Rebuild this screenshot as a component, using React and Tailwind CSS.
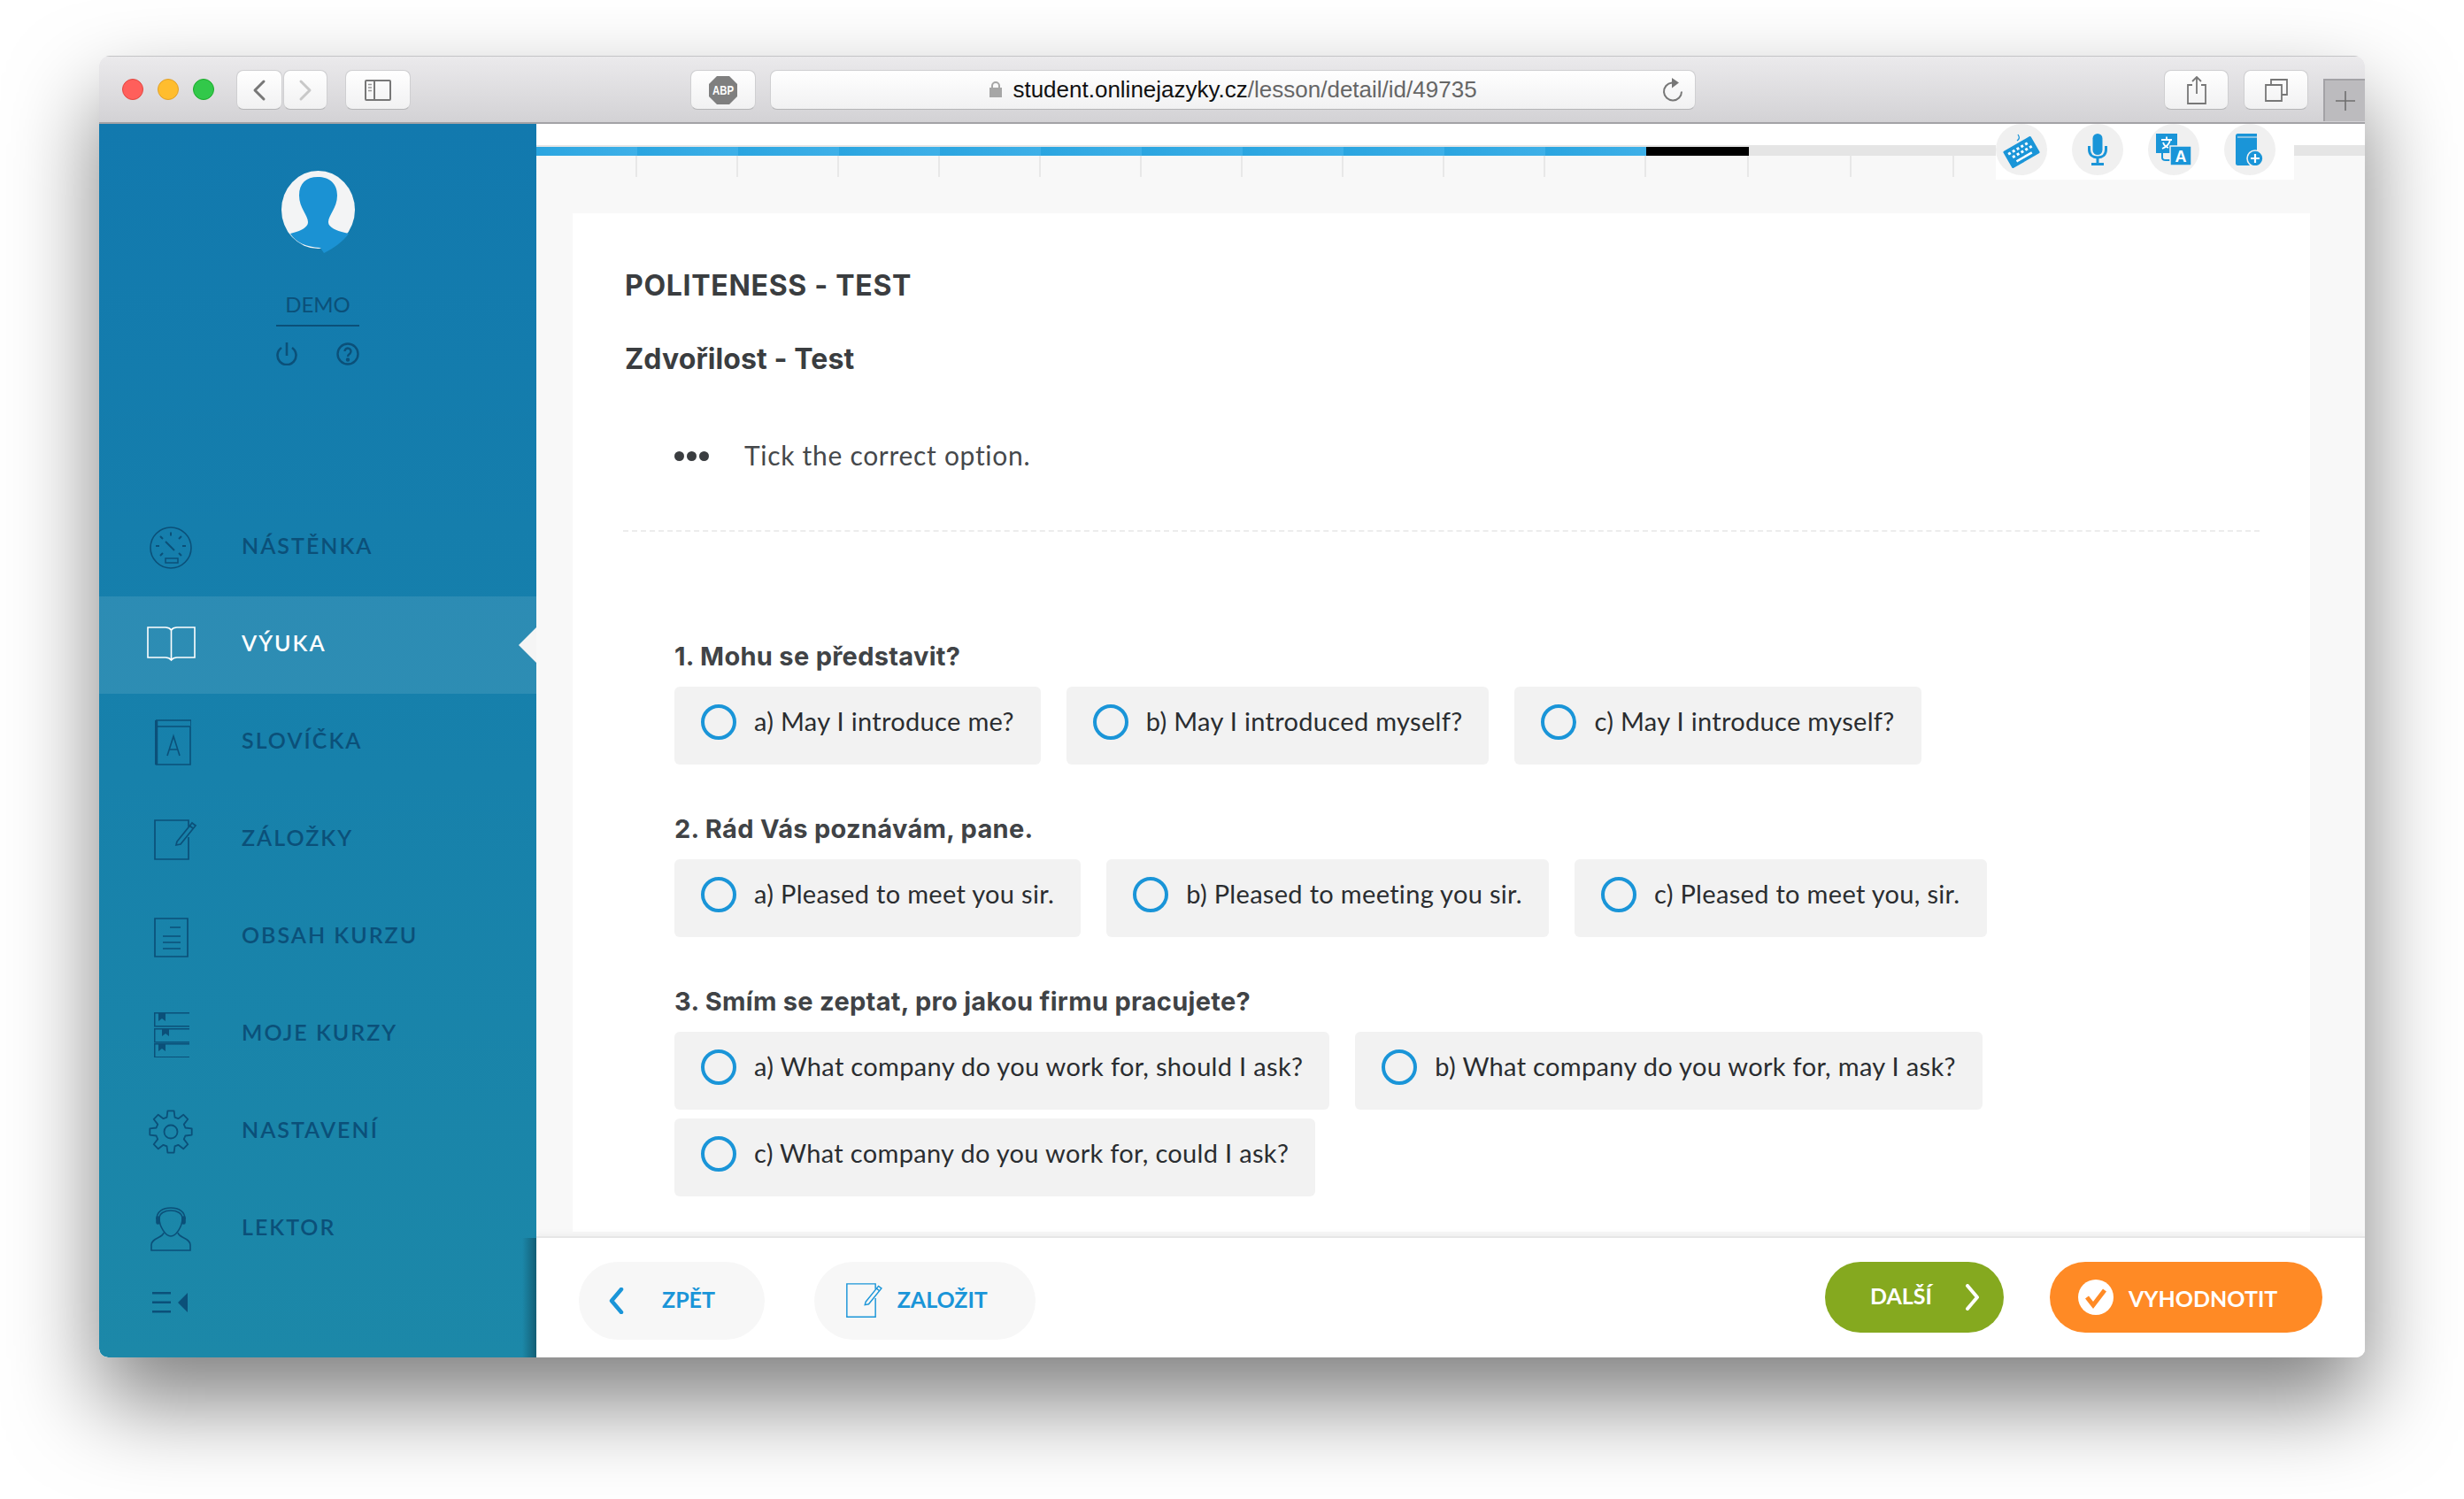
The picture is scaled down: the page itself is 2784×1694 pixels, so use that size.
import { ChevronLeft, ChevronRight } from "lucide-react";

const dark = "#0b5079";

const gearPoints = () => {
  const pts = [];
  for (let i = 0; i < 8; i++) {
    const a = (i * Math.PI) / 4 - Math.PI / 2;
    [[-0.27, 17], [-0.15, 24], [0.15, 24], [0.27, 17]].forEach(([d, r]) => {
      pts.push(`${(25 + r * Math.cos(a + d)).toFixed(1)},${(25 + r * Math.sin(a + d)).toFixed(1)}`);
    });
  }
  return pts.join(" ");
};

function GaugeIcon() {
  return (
    <svg width="48" height="48" viewBox="0 0 48 48" fill="none" stroke="currentColor" strokeWidth="1.600">
      <circle cx="24" cy="24" r="23" />
      <path d="M18 17l10 10M24 6.500v4M12 11l3 3M36 11l-3 3M7 22h4M37 22h4M12 33l3-3M36 33l-3-3" strokeWidth="2" />
      <rect x="18" y="36" width="14" height="5" strokeWidth="1.500" />
    </svg>
  );
}

function BookIcon() {
  return (
    <svg width="55" height="42" viewBox="0 0 55 42" fill="none" stroke="#fff" strokeWidth="1.600">
      <path d="M1 1h20c3 0 5 1 6.500 3C29 2 31 1 34 1h20v34H34c-3 0-5 1-6.500 3C26 36 24 35 21 35H1z" />
      <path d="M27.500 4v34" />
    </svg>
  );
}

function WordsIcon() {
  return (
    <svg width="41" height="52" viewBox="0 0 41 52" fill="none" stroke="currentColor" strokeWidth="1.600">
      <path d="M1.500 8H40V51H1.500z" />
      <path d="M1 1h40v6" />
      <path d="M1.500 1v50" strokeWidth="3.500" />
      <path d="M14 41l7-22 7 22M16.500 34h9" />
    </svg>
  );
}

function NoteIcon({ color = "currentColor", size = 1 }) {
  return (
    <svg width={49 * size} height={46 * size} viewBox="0 0 49 46" fill="none" stroke={color} strokeWidth="1.700">
      <path d="M39 8V1H1v44h38V20" />
      <path d="M26 25L43 4l4 3-17 21-5 1z" />
      <path d="M40 7l4 3" />
    </svg>
  );
}

function ContentsIcon() {
  return (
    <svg width="39" height="45" viewBox="0 0 39 45" fill="none" stroke="currentColor" strokeWidth="1.700">
      <path d="M1 1h37v43H1z" />
      <path d="M18 11h12M10 21h20M10 28h20M10 35h20" />
    </svg>
  );
}

function CoursesIcon() {
  return (
    <svg width="40" height="51" viewBox="0 0 40 51" fill="currentColor">
      <path d="M0 0h40v1.500H1.500V15H40v1.500H0zM0 18h40v1.500H1.500V33H40v1.500H0zM0 35h40v1.500H1.500V50H40v1.500H0z" />
      <path d="M5 1h8v9l-4-3-4 3zM9 19h8v8l-4-3-4 3zM5 36h8v8l-4-3-4 3z" />
    </svg>
  );
}

function GearIcon() {
  return (
    <svg width="50" height="50" viewBox="0 0 50 50" fill="none" stroke="currentColor" strokeWidth="1.800" strokeLinejoin="round">
      <polygon points={gearPoints()} />
      <circle cx="25" cy="25" r="7.500" />
    </svg>
  );
}

function TutorIcon() {
  return (
    <svg width="46" height="50" viewBox="0 0 46 50" fill="none" stroke="currentColor" strokeWidth="1.600">
      <path d="M7 14C7 5 14 1 23 1s16 4 16 13" />
      <path d="M10 13c0-6 6-9 13-9s13 3 13 9c0 9-7 20-13 20S10 22 10 13z" />
      <rect x="7" y="11" width="3" height="8" rx="1.500" fill="currentColor" />
      <rect x="36" y="11" width="3" height="8" rx="1.500" fill="currentColor" />
      <path d="M15 29c-1 6-14 6-14 14v6h44v-6c0-8-13-8-14-14" />
    </svg>
  );
}

const navItems = [
  { label: "NÁSTĚNKA", icon: <GaugeIcon /> },
  { label: "VÝUKA", icon: <BookIcon />, active: true },
  { label: "SLOVÍČKA", icon: <WordsIcon />, nudge: "pl-[4px]" },
  { label: "ZÁLOŽKY", icon: <NoteIcon />, nudge: "pl-[10px]" },
  { label: "OBSAH KURZU", icon: <ContentsIcon /> },
  { label: "MOJE KURZY", icon: <CoursesIcon />, nudge: "pl-[2px]" },
  { label: "NASTAVENÍ", icon: <GearIcon /> },
  { label: "LEKTOR", icon: <TutorIcon /> },
];

const questions = [
  {
    title: "1. Mohu se představit?",
    options: ["a) May I introduce me?", "b) May I introduced myself?", "c) May I introduce myself?"],
  },
  {
    title: "2. Rád Vás poznávám, pane.",
    options: ["a) Pleased to meet you sir.", "b) Pleased to meeting you sir.", "c) Pleased to meet you, sir."],
  },
  {
    title: "3. Smím se zeptat, pro jakou firmu pracujete?",
    options: [
      "a) What company do you work for, should I ask?",
      "b) What company do you work for, may I ask?",
      "c) What company do you work for, could I ask?",
    ],
  },
];

function ToolbarButton({ className, children }) {
  return (
    <div className={`h-[45px] flex items-center justify-center rounded-[8px] border border-[#cfcfd1] border-b-[#b5b5b7] bg-gradient-to-b from-white to-[#f1f1f2] ${className}`}>
      {children}
    </div>
  );
}

function Toolbar() {
  return (
    <div className="h-[77px] shrink-0 flex items-start pt-[15px] pl-[26px] border-b-2 border-[#a3a2a6] border-t border-t-[#c4c4c6] bg-gradient-to-b from-[#ebeaec] to-[#d3d2d5]">
      <div className="flex gap-[16px] mt-[10px]">
        <div className="w-[24px] h-[24px] rounded-full bg-[#ff5f5b] border border-[#e2463f]" />
        <div className="w-[24px] h-[24px] rounded-full bg-[#ffbd2e] border border-[#e1a029]" />
        <div className="w-[24px] h-[24px] rounded-full bg-[#32c84a] border border-[#1aab29]" />
      </div>
      <ToolbarButton className="w-[52px] ml-[25px]">
        <ChevronLeft size={40} strokeWidth={1.800} color="#777" />
      </ToolbarButton>
      <ToolbarButton className="w-[50px] ml-[1px]">
        <ChevronRight size={40} strokeWidth={1.800} color="#c8c8c8" />
      </ToolbarButton>
      <ToolbarButton className="w-[74px] ml-[20px]">
        <svg width="30" height="24" viewBox="0 0 30 24" fill="none" stroke="#777" strokeWidth="2">
          <rect x="1" y="1" width="28" height="22" rx="1" />
          <path d="M11 1v22" />
          <path d="M4 5.500h4M4 9h4M4 12.500h4" strokeWidth="1.500" stroke="#999" />
        </svg>
      </ToolbarButton>
      <ToolbarButton className="w-[74px] ml-[316px]">
        <svg width="34" height="34" viewBox="0 0 34 34">
          <polygon points="10,1 24,1 33,10 33,24 24,33 10,33 1,24 1,10" fill="#7f7f7f" />
          <text x="17" y="22" textAnchor="middle" fill="#fff" fontSize="14" fontWeight="700" textLength="24" lengthAdjust="spacingAndGlyphs" className="font-['Liberation_Sans',sans-serif]">ABP</text>
        </svg>
      </ToolbarButton>
      <ToolbarButton className="w-[1046px] ml-[16px] relative font-['Liberation_Sans',sans-serif] text-[26px]">
        <svg width="16" height="20" viewBox="0 0 16 20" className="mr-[11px] mb-[2px]">
          <path d="M4 9V6a4 4 0 018 0v3" fill="none" stroke="#a6a6a6" strokeWidth="2" />
          <rect x="1" y="8" width="14" height="11" fill="#a6a6a6" />
        </svg>
        <span className="text-[#111]">student.onlinejazyky.cz</span>
        <span className="text-[#666]">/lesson/detail/id/49735</span>
        <svg width="24" height="28" viewBox="0 0 24 28" fill="none" className="absolute right-[13px] top-[8px]">
          <path d="M11 5.500A10 10 0 1022 15.500" stroke="#777" strokeWidth="2" />
          <path d="M11 0l8 5.500-8 6z" fill="#777" />
        </svg>
      </ToolbarButton>
      <ToolbarButton className="w-[73px] ml-[529px]">
        <svg width="24" height="32" viewBox="0 0 24 32" fill="none" stroke="#777" strokeWidth="1.800">
          <path d="M7 10H2v21h20V10h-5M12 20V1M7 6l5-5 5 5" />
        </svg>
      </ToolbarButton>
      <ToolbarButton className="w-[73px] ml-[17px]">
        <svg width="26" height="26" viewBox="0 0 26 26" fill="none" stroke="#777" strokeWidth="1.800">
          <path d="M7 7V1h18v17h-6" />
          <path d="M1 7h18v18H1z" />
        </svg>
      </ToolbarButton>
      <div className="w-[47px] h-[48px] ml-[17px] mt-[10px] flex items-center justify-center bg-[#bcbbbe] border-l-2 border-t-2 border-[#a3a2a6]">
        <svg width="22" height="22" viewBox="0 0 22 22" stroke="#6f6f6f" strokeWidth="1.600">
          <path d="M11 0v22M0 11h22" />
        </svg>
      </div>
    </div>
  );
}

function Avatar() {
  return (
    <svg width="83" height="93" viewBox="0 0 83 93">
      <ellipse cx="41.500" cy="44" rx="41.500" ry="44" fill="#f3f4f5" />
      <path d="M41 7C28 7 20 14 20 28c0 14 10 22 10 30 0 6-8 10-20 13 6 10 18 15 34 16l4 6c10-5 22-13 28-22-14-3-23-7-23-13 0-8 10-16 10-30C63 14 54 7 41 7z" fill="#1b92d3" />
    </svg>
  );
}

function Sidebar() {
  return (
    <div className="w-[494px] shrink-0 flex flex-col bg-gradient-to-b from-[#1279ae] to-[#1c88a8] text-[#0b5079] rounded-bl-[10px]">
      <div className="h-[424px] flex flex-col items-center pt-[53px]">
        <Avatar />
        <div className="mt-[43px] w-[94px] pb-[9px] text-center text-[24px] leading-[29px] border-b-2 border-[#0b5079]">DEMO</div>
        <div className="mt-[17px] flex gap-[44px] items-center pr-[1px]">
          <svg width="24" height="27" viewBox="0 0 24 27" fill="none" stroke={dark} strokeWidth="2.600">
            <path d="M12 1v15" />
            <path d="M6 7a10.500 10.500 0 1012 0" />
          </svg>
          <svg width="26" height="26" viewBox="0 0 26 26" fill="none" stroke={dark} strokeWidth="2.400">
            <circle cx="13" cy="13" r="11.500" />
            <path d="M9.500 10a3.500 3.500 0 116 2.500c-1.500 1-2.500 1.500-2.500 3.500" />
            <circle cx="13" cy="19.500" r="1" fill={dark} />
          </svg>
        </div>
      </div>
      {navItems.map((item) => (
        <div key={item.label} className={`relative h-[110px] flex items-center pl-[48px] ${item.active ? "bg-white/10 text-white" : ""}`}>
          <div className={`w-[66px] flex justify-center ${item.nudge || ""}`}>{item.icon}</div>
          <div className="ml-[47px] mb-[5px] text-[25px] leading-none font-semibold tracking-[2px]">{item.label}</div>
          {item.active && (
            <div className="absolute right-0 top-[35px] w-0 h-0 border-y-[20px] border-y-transparent border-r-[20px] border-r-[#f5f5f5]" />
          )}
        </div>
      ))}
      <div className="pl-[60px] pt-[16px]">
        <svg width="40" height="24" viewBox="0 0 40 24" fill={dark}>
          <path d="M0 0h21v2.500H0zM0 10.500h21V13H0zM0 21h21v2.500H0zM40 1v22L29 12z" />
        </svg>
      </div>
    </div>
  );
}

function ToolCircle({ className = "", children }) {
  return (
    <div className={`w-[58px] h-[58px] rounded-full bg-[#f0f0f0] flex items-center justify-center ${className}`}>
      {children}
    </div>
  );
}

function ProgressBar() {
  const segments = Array.from({ length: 18 }, (_, i) => i);
  const widthOf = (i) => (i < 11 ? "w-[114px]" : i === 17 ? "flex-1" : "w-[116px]");
  return (
    <div className="relative shrink-0">
      <div className="h-[24px] bg-white" />
      <div className="h-[12px] flex items-end bg-[#e5e5e5]">
        {segments.map((i) => (
          <div
            key={i}
            className={`${widthOf(i)} h-[10px] ${i < 11 ? "bg-gradient-to-r from-[#2aa5e0] to-[#3eb0e8]" : ""} ${i === 11 ? "bg-black" : ""}`}
          />
        ))}
      </div>
      <div className="h-[24px] flex bg-[#f8f8f8]">
        {segments.map((i) => (
          <div key={i} className={`${widthOf(i)} border-r-2 border-[#e8e8e8] last:border-r-0`} />
        ))}
      </div>
      <div className="absolute left-[1649px] top-0 w-[337px] h-[63px] bg-white flex gap-[28px]">
        <ToolCircle>
          <svg width="42" height="42" viewBox="0 0 42 42">
            <g transform="rotate(-30 21 24)">
              <rect x="3" y="13" width="36" height="22" rx="1.500" fill="#1a95d8" />
              <path d="M7 17h3v3H7zM12.500 17h3v3h-3zM18 17h3v3h-3zM23.500 17h3v3h-3zM29 17h3v3h-3zM9.500 22.500h3v3h-3zM15 22.500h3v3h-3zM20.500 22.500h3v3h-3zM26 22.500h3v3h-3zM31.500 22.500h3v3h-3zM11 29h20v2.500H11z" fill="#fff" />
            </g>
            <path d="M16 11c3-2 3-4 1-7" fill="none" stroke="#1a95d8" strokeWidth="1.300" />
          </svg>
        </ToolCircle>
        <ToolCircle>
          <svg width="22" height="36" viewBox="0 0 22 36" fill="none" stroke="#1a95d8" strokeWidth="3">
            <rect x="5.500" y="0" width="11" height="24" rx="5.500" fill="#1a95d8" stroke="none" />
            <path d="M1.500 14v4c0 6 4 9 9.500 9s9.500-3 9.500-9v-4M11 27v7M4 34.500h14" />
          </svg>
        </ToolCircle>
        <ToolCircle>
          <svg width="40" height="36" viewBox="0 0 40 36" fill="#1a95d8">
            <path d="M0 0h24v22H0z" />
            <path d="M7 22v5c0 2 1 3 4 3h6" fill="none" stroke="#1a95d8" strokeWidth="2" />
            <path d="M16 14h24v22H16z" stroke="#f0f0f0" strokeWidth="1.500" />
            <path d="M6 7h12M12 3.500V7M16 7c-1 5-4 8-9 10M8 10c1 3 3 5 6 6" fill="none" stroke="#fff" strokeWidth="1.800" />
            <text x="28" y="32" textAnchor="middle" fill="#fff" fontSize="18" fontWeight="700" className="font-['Liberation_Sans',sans-serif]">A</text>
          </svg>
        </ToolCircle>
        <ToolCircle>
          <svg width="32" height="36" viewBox="0 0 32 36">
            <path d="M2.500 0H24v36H2.500A2.500 2.500 0 010 33.500v-31A2.500 2.500 0 012.500 0z" fill="#1a95d8" />
            <path d="M2 4h22" stroke="#f0f0f0" strokeWidth="1.200" />
            <circle cx="22" cy="28" r="9" fill="#1a95d8" stroke="#f0f0f0" strokeWidth="1.600" />
            <path d="M22 23v10M17 28h10" stroke="#fff" strokeWidth="2.200" />
          </svg>
        </ToolCircle>
      </div>
    </div>
  );
}

function Option({ text }) {
  return (
    <div className="h-[88px] flex items-start pt-[20px] pl-[30px] pr-[30px] bg-[#f2f2f2] rounded-[6px]">
      <div className="w-[40px] h-[40px] rounded-full border-[4px] border-[#1a95d8] shrink-0" />
      <div className="ml-[20px] h-[38px] leading-[38px] text-[29px] text-[#2a2d30] tracking-[0.320px]">{text}</div>
    </div>
  );
}

function BottomBar() {
  return (
    <div className="relative shrink-0 h-[137px] flex justify-between items-start pt-[27px] px-[48px] bg-white border-t-2 border-[#e6e6e6] shadow-[0_-4px_6px_rgba(0,0,0,0.03)]">
      <div className="absolute right-full top-0 bottom-0 w-[16px] bg-gradient-to-l from-black/30 to-transparent" />
      <div className="flex gap-[56px]">
        <div className="w-[210px] h-[88px] rounded-full bg-[#f7f7f7] flex items-center pl-[32px] text-[#1a95d8]">
          <svg width="20" height="30" viewBox="0 0 20 30" fill="none" stroke="#1a95d8" strokeWidth="4.500" strokeLinecap="round" strokeLinejoin="round">
            <path d="M16 2L5 15l11 13" />
          </svg>
          <span className="ml-[42px] mb-[2px] text-[25px] font-bold">ZPĚT</span>
        </div>
        <div className="w-[250px] h-[88px] rounded-full bg-[#f7f7f7] flex items-center pl-[36px] text-[#1a95d8]">
          <NoteIcon color="#1a95d8" size={0.85} />
          <span className="ml-[16px] mb-[2px] text-[25px] font-bold">ZALOŽIT</span>
        </div>
      </div>
      <div className="flex gap-[52px]">
        <div className="w-[202px] h-[80px] rounded-full bg-[#85a91f] flex items-center pl-[51px] text-white">
          <span className="mb-[2px] text-[25px] font-bold">DALŠÍ</span>
          <svg width="20" height="30" viewBox="0 0 20 30" fill="none" stroke="#fff" strokeWidth="4" strokeLinecap="round" strokeLinejoin="round" className="ml-[36px]">
            <path d="M4 2l11 13L4 28" />
          </svg>
        </div>
        <div className="w-[308px] h-[80px] rounded-full bg-[#ff8a25] flex items-center pl-[32px] text-white">
          <svg width="40" height="40" viewBox="0 0 40 40">
            <circle cx="20" cy="20" r="20" fill="#fff" />
            <path d="M10 20l7 9 13-17" fill="none" stroke="#ff8a25" strokeWidth="5" />
          </svg>
          <span className="ml-[17px] mt-[3px] text-[25px] font-bold">VYHODNOTIT</span>
        </div>
      </div>
    </div>
  );
}

export default function App() {
  return (
    <div className="w-[2784px] h-[1694px] bg-white overflow-hidden pt-[63px] pl-[112px] font-['Lato',sans-serif]">
      <div className="w-[2560px] h-[1471px] flex flex-col rounded-t-[12px] rounded-b-[10px] shadow-[0_50px_100px_rgba(0,0,0,0.5)] overflow-hidden">
        <Toolbar />
        <div className="flex-1 flex min-h-0">
          <Sidebar />
          <div className="flex-1 flex flex-col min-w-0 bg-[#f8f8f8]">
            <ProgressBar />
            <div className="flex-1 min-h-0 overflow-hidden pt-[41px] pl-[41px] pr-[62px]">
              <div className="bg-white pt-[62px] pl-[59px] pr-[57px] pb-[40px]">
                <h1 className="text-[32px] leading-[40px] font-bold tracking-[0.700px] text-[#3a3d40] font-['Inter',sans-serif]">POLITENESS - TEST</h1>
                <h2 className="mt-[43px] text-[32px] leading-[40px] font-bold tracking-[0.100px] text-[#3a3d40] font-['Inter',sans-serif]">Zdvořilost - Test</h2>
                <div className="mt-[69px] ml-[56px] flex items-center h-[40px]">
                  <div className="flex gap-[3px] w-[79px]">
                    <span className="w-[11px] h-[11px] rounded-full bg-[#3a3d40]" />
                    <span className="w-[11px] h-[11px] rounded-full bg-[#3a3d40]" />
                    <span className="w-[11px] h-[11px] rounded-full bg-[#3a3d40]" />
                  </div>
                  <p className="mb-[2px] text-[30px] text-[#45484b] tracking-[0.700px]">Tick the correct option.</p>
                </div>
                <div className="mt-[64px] border-t-2 border-dashed border-[#ececec] -ml-[2px]" />
                <div className="mt-[124px] ml-[56px]">
                  {questions.map((q, i) => (
                    <div key={q.title} className={i > 0 ? "mt-[56px]" : ""}>
                      <h3 className="h-[34px] leading-[34px] text-[29px] font-bold tracking-[0.300px] text-[#404346] font-['Inter',sans-serif]">{q.title}</h3>
                      <div className="mt-[17px] flex flex-wrap gap-x-[29px] gap-y-[10px]">
                        {q.options.map((o) => (
                          <Option key={o} text={o} />
                        ))}
                      </div>
                    </div>
                  ))}
                </div>
              </div>
            </div>
            <BottomBar />
          </div>
        </div>
      </div>
    </div>
  );
}
